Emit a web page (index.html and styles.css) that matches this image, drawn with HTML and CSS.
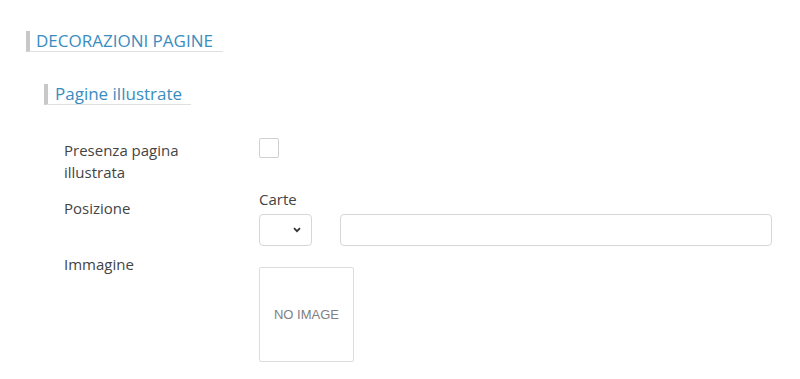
FILE: index.html
```html
<!DOCTYPE html>
<html lang="it">
<head>
   <meta charset="UTF-8">
   <meta name="viewport" content="width=device-width, initial-scale=1.0">
   <title>Decorazioni pagine</title>
   <link rel="stylesheet" href="styles.css">
</head>
<body>
   <div class="section">
       <h2 class="section-title">DECORAZIONI PAGINE</h2>

       <div class="subsection">
           <h3 class="subsection-title">Pagine illustrate</h3>

           <div class="form">
               <div class="row row-check">
                   <label class="label">Presenza pagina illustrata</label>
                   <div class="field">
                       <span class="checkbox"></span>
                   </div>
               </div>

               <div class="row row-pos">
                   <label class="label">Posizione</label>
                   <div class="field">
                       <div class="field-caption">Carte</div>
                       <div class="inline">
                           <div class="select">
                               <svg width="8" height="6" viewBox="0 0 8 6"><path d="M1 1.2 L4 4.2 L7 1.2" fill="none" stroke="#333" stroke-width="1.8"/></svg>
                           </div>
                           <div class="text-input"></div>
                       </div>
                   </div>
               </div>

               <div class="row row-img">
                   <label class="label">Immagine</label>
                   <div class="field">
                       <div class="thumb">NO IMAGE</div>
                   </div>
               </div>
           </div>
       </div>
   </div>
</body>
</html>
```

FILE: styles.css
```css
body {
    margin: 0;
    padding: 30px 0 0 26px;
    font-family: "Open Sans", sans-serif;
    color: #444;
    background: #fff;
}

/* Заголовки */
.section-title {
    display: inline-block;
    margin: 0;
    padding: 0 10px 0 6px;
    font-size: 17px;
    font-weight: 400;
    line-height: 20px;
    color: #3a8dbf;
    border-left: 4px solid #c8c8c8;
    border-bottom: 1px solid #e0e0e0;
}

.subsection {
    padding: 31px 0 0 18px;
}

.subsection-title {
    display: inline-block;
    margin: 0;
    padding: 0 9px 0 7px;
    font-size: 17px;
    font-weight: 400;
    line-height: 20px;
    color: #3a8dbf;
    border-left: 4px solid #c8c8c8;
    border-bottom: 1px solid #e0e0e0;
}

/* Форма */
.form {
    padding: 34px 0 0 20px;
}

.row {
    display: flex;
    font-size: 15px;
    line-height: 22px;
}

.label {
    width: 195px;
    flex-shrink: 0;
    padding-right: 50px;
    box-sizing: border-box;
}

.field {
    flex: 1;
}

.checkbox {
    display: block;
    width: 20px;
    height: 20px;
    box-sizing: border-box;
    margin-top: -1px;
    border: 1px solid #d0d0d0;
    border-radius: 2px;
}

.row-pos {
    margin-top: 5px;
}

.row-pos .label {
    padding-top: 9px;
}

.inline {
    display: flex;
    gap: 28px;
    margin-top: 4px;
}

.select {
    width: 53px;
    height: 32px;
    box-sizing: border-box;
    padding-right: 10px;
    border: 1px solid #d6d6d6;
    border-radius: 4px;
    display: flex;
    align-items: center;
    justify-content: flex-end;
}

.text-input {
    width: 432px;
    height: 32px;
    box-sizing: border-box;
    border: 1px solid #d6d6d6;
    border-radius: 4px;
}

.row-img {
    margin-top: 7px;
}

.thumb {
    width: 95px;
    height: 95px;
    box-sizing: border-box;
    margin-top: 14px;
    border: 1px solid #dcdcdc;
    border-radius: 2px;
    display: flex;
    align-items: center;
    justify-content: center;
    font-family: "Liberation Sans", Arial, sans-serif;
    font-size: 13px;
    color: #808080;
}
```
